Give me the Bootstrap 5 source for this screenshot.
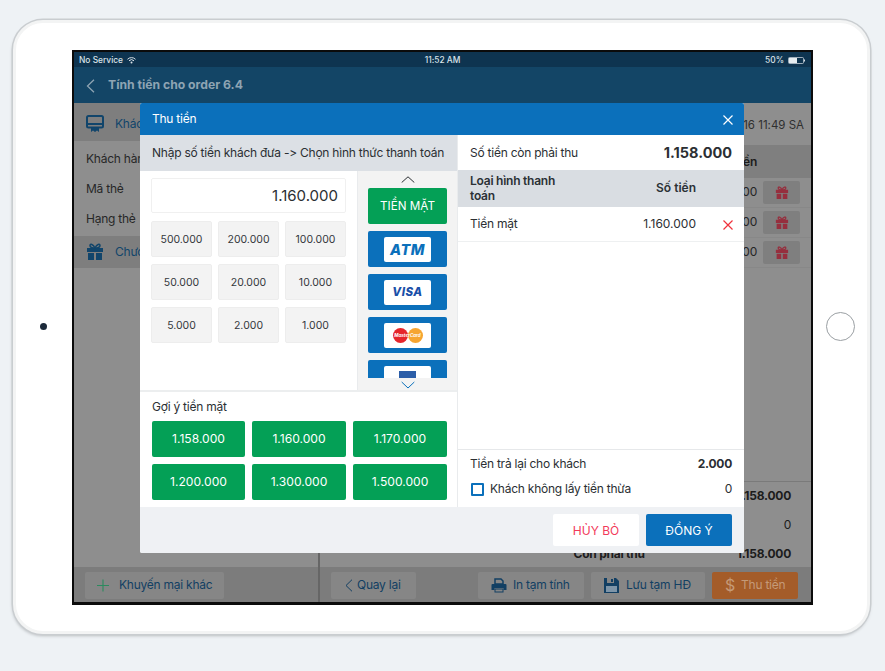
<!DOCTYPE html>
<html lang="vi">
<head>
<meta charset="utf-8">
<title>Thu tiền</title>
<link rel="stylesheet" href="https://cdn.jsdelivr.net/npm/bootstrap@5.3.0/dist/css/bootstrap.min.css">
<style>
html,body{height:671px;overflow:hidden}
body{background:#eef2f5;font-family:Inter,"Noto Sans","Liberation Sans",sans-serif;font-size:12px;letter-spacing:-.24px;font-feature-settings:"calt" 0,"liga" 0;color:#2b2f33;line-height:1.2}
.tablet{position:relative;width:857px;height:614px;margin:20px 0 0 13px;padding:27px 0 0 56px;background:#fff;border:3px solid #f3f4f4;border-radius:30px;box-shadow:0 0 0 1.5px #c9cdd0,-1px 2px 3px #c2c6c9,1px 2px 3px #dfe3e6}
.cam{position:absolute;left:24px;top:300px;width:7px;height:7px;border-radius:50%;background:#1c2a3a}
.home{position:absolute;left:810px;top:289px;width:29px;height:29px;border-radius:50%;border:1.5px solid #9a9fa3;background:#fff}
.screen{position:relative;width:741px;height:555px;border:2px solid #0b0b0b;border-bottom-width:3px;background:#8e8e8e;overflow:hidden}
.status{height:15px;background:#0e3450;color:#dbe3e9;font-size:8.4px;font-weight:500;padding:1px 5px 0;letter-spacing:0}
.status-time{padding-right:16px}
.topbar{height:36px;background:#134566;color:#8ea4b3;font-weight:700;font-size:12.2px;letter-spacing:0;padding:1px 0 0 12px;gap:13px}
.appmain{height:500px}
.leftcol{width:246px;border-right:2px solid #666}
.rightcol{width:491px}
.sect{background:#7e7e7e;color:#11456b;padding-left:12px;gap:11px}
.sect-a{height:38px;padding-top:4px}.sect-b{height:32px}
.inforows{padding:3px 12px 2px;height:95px;color:#272727}
.inforow{height:30px}
.daterow{height:42px;padding:4px 7px 0 0;color:#2f2f2f;font-size:11.5px;letter-spacing:0}
.thead-dim{height:33px;background:#7f7f7f;color:#1c1c1c;font-weight:600;padding:1px 54px 0 0}
.trow-dim{height:30px;padding-right:11px;color:#252525;gap:6px;border-bottom:1px solid #888}
.giftbtn{width:37px;height:23px;background:#7f7f7f;border-radius:2px}
.totals{margin-top:auto;border-top:1px solid #7a7a7a;padding:0 20px 0 0;color:#1c1c1c;font-weight:700;height:86px}
.totals>div{height:29px}
.totals-label{margin-right:92px}
.bottombar{height:36px;background:#7c7c7c;padding:5px 13px 5px 11px;gap:7px}
.dimbtn{height:27px;background:#868686;border-radius:2px;color:#123f63;white-space:nowrap;padding-top:1px}
.dim-promo{width:139px;padding-left:12px;gap:10px}
.dim-back{width:85px;padding-left:14px;gap:4px}
.dim-print{width:106px;padding-left:13px;gap:6px}
.dim-save{width:114px;padding-left:13px;gap:7px}
.dim-pay{width:86px;padding-left:13px;gap:6px;background:#a45c29;color:#c49a78}
.dollar{font-size:16px}
.paymodal{position:absolute;left:66px;top:51px;width:604px;height:450px;border:0;border-radius:2px;overflow:hidden;background:#eff1f4}
.payhead{height:32px;background:#0b70bb;color:#fff;padding:1px 11px 0 12px}
.paybody{height:372px;background:#fff}
.pleft{width:318px;border-right:1px solid #e9ebed}
.pright{width:286px}
.hint{height:36px;background:#dce0e5;padding:1px 0 0 12px;white-space:nowrap}
.entry{height:221px;border-bottom:2px solid #eceeef}
.keypad{width:217px;padding:7px 11px}
.amount{height:35px;border:1px solid #f0f0f0;border-radius:2px;font-size:15px;letter-spacing:0;text-align:right;padding:0 7px;margin-bottom:8px;box-shadow:none;color:#2b2f33;font-family:inherit}
.keys{display:grid;grid-template-columns:repeat(3,61px);grid-auto-rows:36px;gap:7px 6px}
.keybtn{background:#f3f3f3;border:1px solid #ededed;border-radius:2px;font-size:10.5px;color:#33383c;padding:1px 0 0;--bs-btn-hover-bg:#eee}
.rail{width:100px;background:#f3f3f3;border-left:1px solid #e9ebed;padding:0 10px}
.railarrow{height:17px}
.railarrow-down{height:14px}
.raillist{height:190px;overflow:hidden;gap:7px}
.paybtn{flex:none;height:36px;border:0;border-radius:2px;padding:1px 0 0;width:79px}
.cardbtn{background:#0b70bb}
.cashbtn{background:#04a056;color:#fff;font-size:11.7px}
.cardface{width:47px;height:25px;background:#fff;border-radius:2px;font-weight:800;font-style:italic;color:#0b70bb;font-size:14.5px;letter-spacing:.5px;margin-top:5px;overflow:hidden}
.visa{font-size:11.5px;color:#1a4fa8}
.mc{position:relative;width:30px;height:15px}
.mc i{position:absolute;top:0;width:15px;height:15px;border-radius:50%}
.mc i:first-child{left:0;background:#e5262c}
.mc i:nth-child(2){right:0;background:#f6a531}
.mc b{position:relative;display:block;font-size:4.5px;color:#fff;font-style:italic;line-height:15px;text-align:center;letter-spacing:0;font-weight:700}
.amexbox{width:17px;height:14px;background:#2c5ea8;margin-top:5px}
.suggest{padding:8px 11px 7px 12px;height:115px}
.sugtitle{margin-bottom:9px;height:12px}
.sugs{display:grid;grid-template-columns:93px 94px 94px;grid-auto-rows:36px;gap:7px}
.sugbtn{background:#04a056;border:0;border-radius:2px;color:#fff;font-size:12.1px;padding:1px 0 0}
.duerow{height:35px;padding:1px 12px 0}
.duerow b{font-size:14.5px;font-weight:700;letter-spacing:0}
.paythead{height:37px;background:#d9dde2;padding:0 12px;font-weight:600;color:#2b3136;line-height:14.5px}
.col-type{width:110px}
.col-money{width:116px;text-align:right;letter-spacing:0}
.col-act{flex:1;text-align:right}
.payrow{height:35px;padding:1px 11px 0 12px;border-bottom:1px solid #eef0f1}
.changebox{margin-top:auto;height:58px;border-top:1px solid #e6e8ea;padding:2px 12px 0}
.changebox>div{height:25px}
.tick{width:13px;height:13px;border:2px solid #0b70bb;border-radius:1px;margin:0 6px 0 1px;flex:none;appearance:none;-webkit-appearance:none;background:#fff}
.payfoot{height:46px;padding:7px 12px 7px 0;gap:7px;background:#eff1f4}
.footbtn{width:86px;height:32px;border-radius:2px;font-size:12px;padding:1px 0 0;border:0}
.btn-cancel{background:#fff;color:#f23a5a;--bs-btn-hover-bg:#fff}
.btn-ok{background:#0b70bb;color:#fff}
</style>
</head>
<body>
<div class="tablet">
  <div class="cam"></div>
  <div class="home"></div>
  <div class="screen">
    <div class="status d-flex align-items-center">
      <span>No Service</span>
      <svg class="ms-1" width="9" height="7" viewBox="0 0 9 7"><path d="M.5 2.300a5.600 5.600 0 0 1 8 0M2 3.800a3.500 3.500 0 0 1 5 0" fill="none" stroke="#dbe3e9" stroke-width="1"/><circle cx="4.500" cy="5.600" r="1" fill="#dbe3e9"/></svg>
      <span class="flex-grow-1 text-center status-time">11:52 AM</span>
      <span>50%</span>
      <svg class="ms-1" width="18" height="7" viewBox="0 0 18 7"><rect x=".5" y=".5" width="15" height="6" rx="1" fill="none" stroke="#dbe3e9" stroke-width=".7"/><rect x="1" y="1" width="8" height="5" fill="#e6ecf0"/><rect x="16" y="2.500" width="1" height="2" fill="#dbe3e9"/></svg>
    </div>
    <div class="topbar d-flex align-items-center">
      <svg width="9" height="14" viewBox="0 0 9 14"><path d="M8 .7 1.500 7 8 13.300" fill="none" stroke="#8ea4b3" stroke-width="1.300"/></svg>
      <span>Tính tiền cho order 6.4</span>
    </div>
    <div class="appmain d-flex">
      <div class="leftcol d-flex flex-column">
        <div class="sect sect-a d-flex align-items-center">
          <svg width="18" height="18" viewBox="0 0 18 18"><rect x="1" y="1" width="16" height="11.500" rx="1.500" fill="none" stroke="#11456b" stroke-width="2"/><rect x="1" y="8" width="16" height="2" fill="#11456b"/><path d="M5 12.500h8V17l-2-1.500-2 1.500-2-1.500L5 17z" fill="#11456b"/></svg>
          <span>Khách hàng</span>
        </div>
        <div class="inforows">
          <div class="inforow d-flex align-items-center">Khách hàng</div>
          <div class="inforow d-flex align-items-center">Mã thẻ</div>
          <div class="inforow d-flex align-items-center">Hạng thẻ</div>
        </div>
        <div class="sect sect-b d-flex align-items-center">
          <svg width="18" height="18" viewBox="0 0 18 18"><path d="M1 5h16v4H1zM2 10h6v7H2zM10 10h6v7h-6z" fill="#11456b"/><path d="M9 5C7 1 4 .5 4 2.500S6.500 5 9 5c2.500 0 5-.5 5-2.500S11 1 9 5z" fill="none" stroke="#11456b" stroke-width="1.500"/></svg>
          <span>Chương trình</span>
        </div>
        <div class="bottombar d-flex align-items-center mt-auto">
          <div class="dimbtn dim-promo d-flex align-items-center">
            <svg width="12" height="13" viewBox="0 0 13 13"><path d="M6.500 0v13M0 6.500h13" stroke="#2c8a5e" stroke-width="1.200"/></svg>
            <span>Khuyến mại khác</span>
          </div>
        </div>
      </div>
      <div class="rightcol d-flex flex-column">
        <div class="daterow d-flex align-items-center justify-content-end">01/01/2016 11:49 SA</div>
        <div class="thead-dim d-flex align-items-center justify-content-end">Tiền</div>
        <div class="trow-dim d-flex align-items-center justify-content-end"><span>000</span><span class="giftbtn d-flex align-items-center justify-content-center"><svg width="14" height="13" viewBox="0 0 18 17"><path d="M1 5h16v4H1zM2 10h6v7H2zM10 10h6v7h-6z" fill="#962f3e"/><path d="M9 5C7 1 4 .5 4 2.500S6.500 5 9 5c2.500 0 5-.5 5-2.500S11 1 9 5z" fill="none" stroke="#962f3e" stroke-width="1.600"/></svg></span></div>
        <div class="trow-dim d-flex align-items-center justify-content-end"><span>000</span><span class="giftbtn d-flex align-items-center justify-content-center"><svg width="14" height="13" viewBox="0 0 18 17"><path d="M1 5h16v4H1zM2 10h6v7H2zM10 10h6v7h-6z" fill="#962f3e"/><path d="M9 5C7 1 4 .5 4 2.500S6.500 5 9 5c2.500 0 5-.5 5-2.500S11 1 9 5z" fill="none" stroke="#962f3e" stroke-width="1.600"/></svg></span></div>
        <div class="trow-dim d-flex align-items-center justify-content-end"><span>000</span><span class="giftbtn d-flex align-items-center justify-content-center"><svg width="14" height="13" viewBox="0 0 18 17"><path d="M1 5h16v4H1zM2 10h6v7H2zM10 10h6v7h-6z" fill="#962f3e"/><path d="M9 5C7 1 4 .5 4 2.500S6.500 5 9 5c2.500 0 5-.5 5-2.500S11 1 9 5z" fill="none" stroke="#962f3e" stroke-width="1.600"/></svg></span></div>
        <div class="totals">
          <div class="d-flex align-items-center justify-content-end">1.158.000</div>
          <div class="d-flex align-items-center justify-content-end fw-normal">0</div>
          <div class="d-flex align-items-center justify-content-end"><span class="totals-label">Còn phải thu</span><span>1.158.000</span></div>
        </div>
        <div class="bottombar d-flex align-items-center">
          <div class="dimbtn dim-back d-flex align-items-center">
            <svg width="8" height="13" viewBox="0 0 8 13"><path d="M7 .7 1 6.500 7 12.300" fill="none" stroke="#123f63" stroke-width="1"/></svg>
            <span>Quay lại</span>
          </div>
          <div class="dimbtn dim-print d-flex align-items-center ms-auto">
            <svg width="16" height="15" viewBox="0 0 16 15"><path d="M4 1h6l2 2v3H4z" fill="none" stroke="#123f63" stroke-width="1.500"/><path d="M1.500 6h13a1 1 0 0 1 1 1v5h-3v-2h-9v2H.5V7a1 1 0 0 1 1-1z" fill="#123f63"/><rect x="4" y="11" width="8" height="3" fill="none" stroke="#123f63"/></svg>
            <span>In tạm tính</span>
          </div>
          <div class="dimbtn dim-save d-flex align-items-center">
            <svg width="15" height="15" viewBox="0 0 15 15"><path d="M0 0h12l3 3v12H0z" fill="#123f63"/><rect x="3" y="0" width="7" height="5" fill="#868686"/><rect x="7" y="1" width="2" height="3" fill="#123f63"/><rect x="2" y="8" width="11" height="6" fill="#7e95a8"/></svg>
            <span>Lưu tạm HĐ</span>
          </div>
          <div class="dimbtn dim-pay d-flex align-items-center">
            <span class="dollar">$</span><span>Thu tiền</span>
          </div>
        </div>
      </div>
    </div>

    <div class="paymodal modal-content">
      <div class="payhead d-flex align-items-center justify-content-between">
        <span>Thu tiền</span>
        <svg width="10" height="10" viewBox="0 0 10 10"><path d="M.5.500l9 9m0-9-9 9" stroke="#fff" stroke-width="1.200"/></svg>
      </div>
      <div class="paybody d-flex">
        <div class="pleft d-flex flex-column">
          <div class="hint d-flex align-items-center">Nhập số tiền khách đưa -&gt; Chọn hình thức thanh toán</div>
          <div class="entry d-flex">
            <div class="keypad">
              <input class="form-control amount" value="1.160.000" readonly>
              <div class="keys">
                <button class="btn keybtn">500.000</button><button class="btn keybtn">200.000</button><button class="btn keybtn">100.000</button>
                <button class="btn keybtn">50.000</button><button class="btn keybtn">20.000</button><button class="btn keybtn">10.000</button>
                <button class="btn keybtn">5.000</button><button class="btn keybtn">2.000</button><button class="btn keybtn">1.000</button>
              </div>
            </div>
            <div class="rail">
              <div class="railarrow d-flex justify-content-center align-items-center"><svg width="14" height="7" viewBox="0 0 14 7"><path d="M.7 6.500 7 .8l6.300 5.700" fill="none" stroke="#2b2f33" stroke-width="1"/></svg></div>
              <div class="raillist d-flex flex-column">
                <button class="btn paybtn cashbtn">TIỀN MẶT</button>
                <button class="btn paybtn cardbtn d-flex justify-content-center"><span class="cardface d-flex align-items-center justify-content-center">ATM</span></button>
                <button class="btn paybtn cardbtn d-flex justify-content-center"><span class="cardface visa d-flex align-items-center justify-content-center">VISA</span></button>
                <button class="btn paybtn cardbtn d-flex justify-content-center"><span class="cardface d-flex align-items-center justify-content-center"><span class="mc"><i></i><i></i><b>MasterCard</b></span></span></button>
                <button class="btn paybtn cardbtn d-flex justify-content-center"><span class="cardface d-flex justify-content-center"><span class="amexbox"></span></span></button>
              </div>
              <div class="railarrow-down d-flex justify-content-center align-items-center"><svg width="14" height="8" viewBox="0 0 14 8"><path d="M.7 1 7 7l6.300-6" fill="none" stroke="#0b70bb" stroke-width="1"/></svg></div>
            </div>
          </div>
          <div class="suggest">
            <div class="sugtitle">Gợi ý tiền mặt</div>
            <div class="sugs">
              <button class="btn sugbtn">1.158.000</button><button class="btn sugbtn">1.160.000</button><button class="btn sugbtn">1.170.000</button>
              <button class="btn sugbtn">1.200.000</button><button class="btn sugbtn">1.300.000</button><button class="btn sugbtn">1.500.000</button>
            </div>
          </div>
        </div>
        <div class="pright d-flex flex-column">
          <div class="duerow d-flex align-items-center justify-content-between"><span>Số tiền còn phải thu</span><b>1.158.000</b></div>
          <div class="paythead d-flex align-items-center">
            <span class="col-type">Loại hình thanh toán</span>
            <span class="col-money">Số tiền</span>
          </div>
          <div class="payrow d-flex align-items-center">
            <span class="col-type">Tiền mặt</span>
            <span class="col-money">1.160.000</span>
            <span class="col-act"><svg width="10" height="10" viewBox="0 0 10 10"><path d="M.5.500l9 9m0-9-9 9" stroke="#f0323c" stroke-width="1.200"/></svg></span>
          </div>
          <div class="changebox">
            <div class="d-flex align-items-center justify-content-between"><span>Tiền trả lại cho khách</span><b>2.000</b></div>
            <div class="d-flex align-items-center"><input type="checkbox" class="tick"><span class="flex-grow-1">Khách không lấy tiền thừa</span><span>0</span></div>
          </div>
        </div>
      </div>
      <div class="payfoot d-flex justify-content-end">
        <button class="btn footbtn btn-cancel">HỦY BỎ</button>
        <button class="btn footbtn btn-ok">ĐỒNG Ý</button>
      </div>
    </div>
  </div>
</div>
<script src="https://cdn.jsdelivr.net/npm/bootstrap@5.3.0/dist/js/bootstrap.bundle.min.js"></script>
</body>
</html>
